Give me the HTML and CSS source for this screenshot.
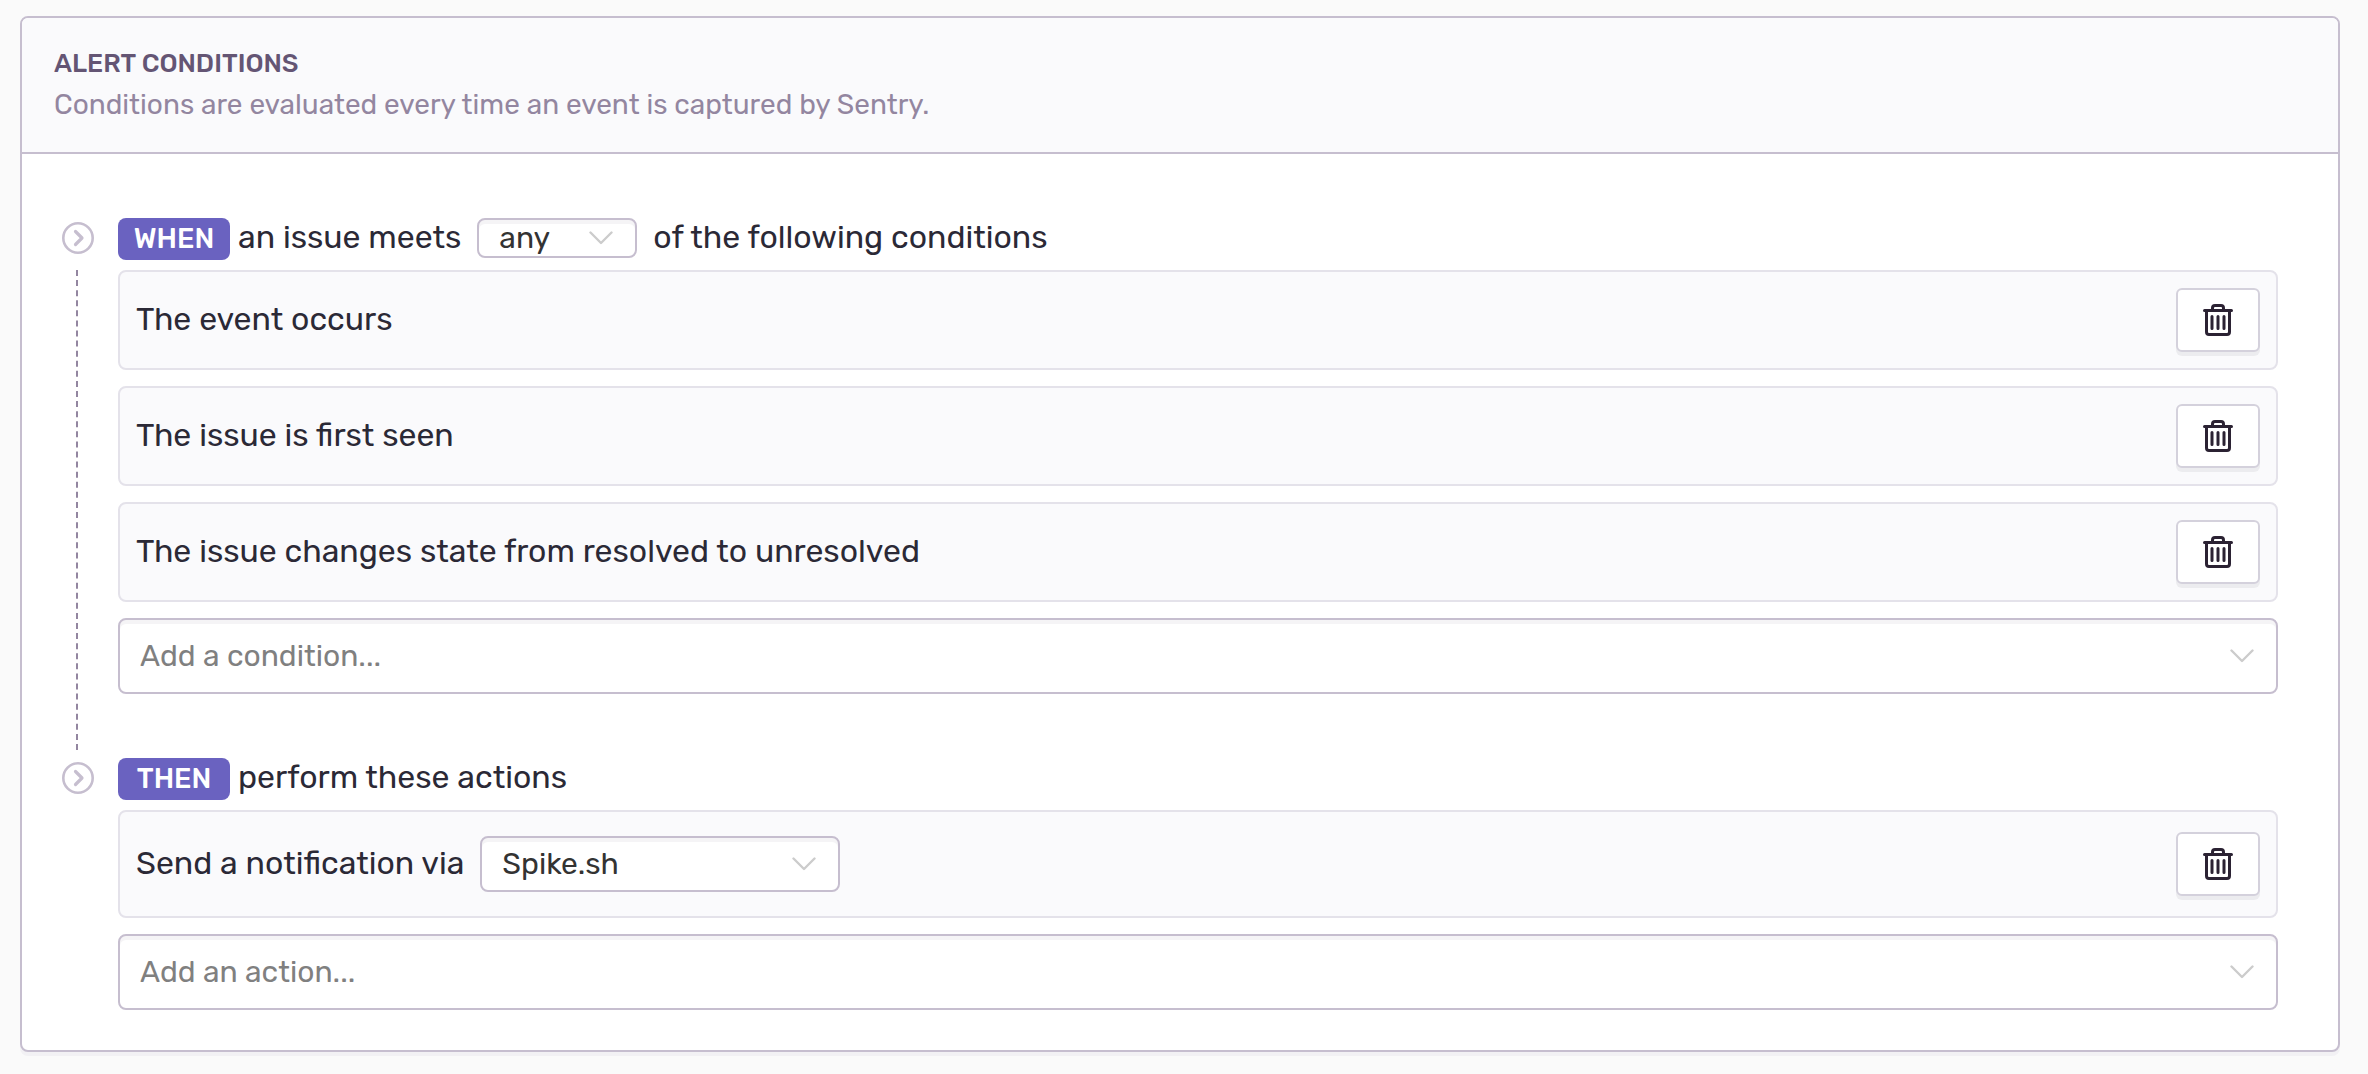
FILE: index.html
```html
<!DOCTYPE html>
<html lang="en">
<head>
<meta charset="utf-8">
<title>Alert Conditions</title>
<link rel="stylesheet" href="styles.css">
</head>
<body>
<svg class="sprite" aria-hidden="true">
  <symbol id="trash" viewBox="0 0 30 32">
    <g fill="none" stroke="currentColor" stroke-linecap="round" stroke-linejoin="round">
      <path d="M1.5 6.5H28.5M3.5 7V28Q3.5 30.5 6 30.5H24Q26.5 30.5 26.5 28V7M9.5 6V4Q9.5 1.5 12 1.5H18Q20.500 1.500 20.500 4V6" stroke-width="3"/>
      <path d="M9 12.500V24.500M15 12.500V24.500M21 12.500V24.500" stroke-width="3"/>
    </g>
  </symbol>
  <symbol id="chevron" viewBox="0 0 24 14">
    <path d="M1.500 1.500L12 12L22.500 1.500" fill="none" stroke="currentColor" stroke-width="2.400" stroke-linecap="round" stroke-linejoin="round"/>
  </symbol>
  <symbol id="step" viewBox="0 0 32 32">
    <circle cx="16" cy="16" r="14.700" fill="none" stroke="currentColor" stroke-width="2.600"/>
    <path d="M13.500 9.500L20 16L13.500 22.500" fill="none" stroke="currentColor" stroke-width="3.200" stroke-linecap="round" stroke-linejoin="round"/>
  </symbol>
</svg>
<main class="panel">
  <header class="panel-header">
    <h1 class="panel-title">Alert Conditions</h1>
    <p class="panel-description">Conditions are evaluated every time an event is captured by Sentry.</p>
  </header>
  <div class="panel-body">
    <section class="step">
      <div class="rail">
        <svg class="step-icon" aria-hidden="true"><use href="#step"/></svg>
        <div class="connector"></div>
      </div>
      <div class="step-content">
        <div class="step-heading">
          <span class="badge">WHEN</span>
          <label for="match">an issue meets</label>
          <span class="select select-match">
            <select id="match"><option>any</option><option>all</option></select>
            <svg class="chevron" aria-hidden="true"><use href="#chevron"/></svg>
          </span>
          <span>of the following conditions</span>
        </div>
        <div class="rules">
          <div class="rule">
            <span class="rule-text">The event occurs</span>
            <button class="delete" type="button" aria-label="Delete condition"><svg class="trash" aria-hidden="true"><use href="#trash"/></svg></button>
          </div>
          <div class="rule">
            <span class="rule-text">The issue is first seen</span>
            <button class="delete" type="button" aria-label="Delete condition"><svg class="trash" aria-hidden="true"><use href="#trash"/></svg></button>
          </div>
          <div class="rule">
            <span class="rule-text">The issue changes state from resolved to unresolved</span>
            <button class="delete" type="button" aria-label="Delete condition"><svg class="trash" aria-hidden="true"><use href="#trash"/></svg></button>
          </div>
          <div class="select select-add">
            <select aria-label="Add a condition"><option>Add a condition...</option></select>
            <svg class="chevron" aria-hidden="true"><use href="#chevron"/></svg>
          </div>
        </div>
      </div>
    </section>
    <section class="step">
      <div class="rail">
        <svg class="step-icon" aria-hidden="true"><use href="#step"/></svg>
      </div>
      <div class="step-content">
        <div class="step-heading">
          <span class="badge">THEN</span>
          <span>perform these actions</span>
        </div>
        <div class="rules">
          <div class="rule rule-action">
            <label class="rule-text" for="service">Send a notification via</label>
            <span class="select select-service">
              <select id="service"><option>Spike.sh</option></select>
              <svg class="chevron" aria-hidden="true"><use href="#chevron"/></svg>
            </span>
            <button class="delete" type="button" aria-label="Delete action"><svg class="trash" aria-hidden="true"><use href="#trash"/></svg></button>
          </div>
          <div class="select select-add">
            <select aria-label="Add an action"><option>Add an action...</option></select>
            <svg class="chevron" aria-hidden="true"><use href="#chevron"/></svg>
          </div>
        </div>
      </div>
    </section>
  </div>
</main>
</body>
</html>
```
FILE: styles.css
```css
* { box-sizing: border-box; }

body {
  margin: 0;
  padding: 16px 28px 22px 20px;
  background: #fafafa;
  color: #2b2936;
  font-family: Rubik, Roboto, sans-serif;
  font-size: 32px;
  line-height: 38px;
}

.sprite { display: none; }

.panel {
  background: #fff;
  border: 2px solid #c6becf;
  border-radius: 8px;
  box-shadow: 0 4px 0 #f2f1f4;
}

.panel-header {
  padding: 25px 32px 27px;
  background: #fafafc;
  border-bottom: 2px solid #c6becf;
  border-radius: 6px 6px 0 0;
}

.panel-title {
  margin: 0;
  color: #645574;
  font-size: 26px;
  font-weight: 500;
  line-height: 42px;
  text-transform: uppercase;
}

.panel-description {
  margin: 0;
  color: #9386a0;
  font-size: 28px;
  line-height: 40px;
}

.panel-body {
  display: flex;
  flex-direction: column;
  gap: 64px;
  padding: 64px 60px 40px 40px;
}

.step { display: flex; gap: 24px; }

.rail {
  position: relative;
  flex: none;
  width: 32px;
  padding-top: 4px;
}

.step-icon {
  display: block;
  width: 32px;
  height: 32px;
  color: #c6becf;
}

/* Dashed line running down to the next step */
.connector {
  position: absolute;
  top: 52px;
  bottom: -56px;
  left: 14px;
  border-left: 2px dashed #9386a0;
}

.step-content { flex: 1; min-width: 0; }

.step-heading {
  display: flex;
  align-items: flex-start;
  gap: 8px;
  height: 42px;
  margin-bottom: 10px;
}

.badge {
  width: 112px;
  border-radius: 8px;
  background: #6a62c0;
  color: #fff;
  font-size: 28px;
  font-weight: 500;
  line-height: 42px;
  text-align: center;
}

.rules { display: flex; flex-direction: column; gap: 16px; }

.rule {
  display: flex;
  align-items: center;
  gap: 16px;
  padding: 16px;
  background: #fafafc;
  border: 2px solid #e4e2ea;
  border-radius: 8px;
}

.rule-action { padding: 20px 16px; }

.rule-text { padding-bottom: 2px; }

.delete {
  display: flex;
  align-items: center;
  justify-content: center;
  width: 84px;
  height: 64px;
  margin-left: auto;
  padding: 0;
  background: #fff;
  border: 2px solid #d4d1dc;
  border-radius: 6px;
  box-shadow: 0 4px 0 #ececef;
  color: #2b2233;
}

.trash { width: 30px; height: 32px; }

.select { position: relative; display: block; color: #333; }

.select select {
  display: block;
  width: 100%;
  height: 100%;
  margin: 0;
  padding: 0 60px 0 20px;
  appearance: none;
  background: #fff;
  border: 2px solid #c6becf;
  border-radius: 8px;
  box-shadow: inset 0 4px 0 #f5f4f6;
  color: inherit;
  font: inherit;
  font-size: 30px;
  line-height: 36px;
}

.chevron {
  position: absolute;
  top: 50%;
  right: 24px;
  width: 24px;
  height: 14px;
  margin-top: -7px;
  color: #ccc;
  pointer-events: none;
}

.select-match { width: 160px; height: 40px; margin: 0 8px; }
.select-service { width: 360px; height: 56px; }
.select-add { height: 76px; color: #808080; }
```
